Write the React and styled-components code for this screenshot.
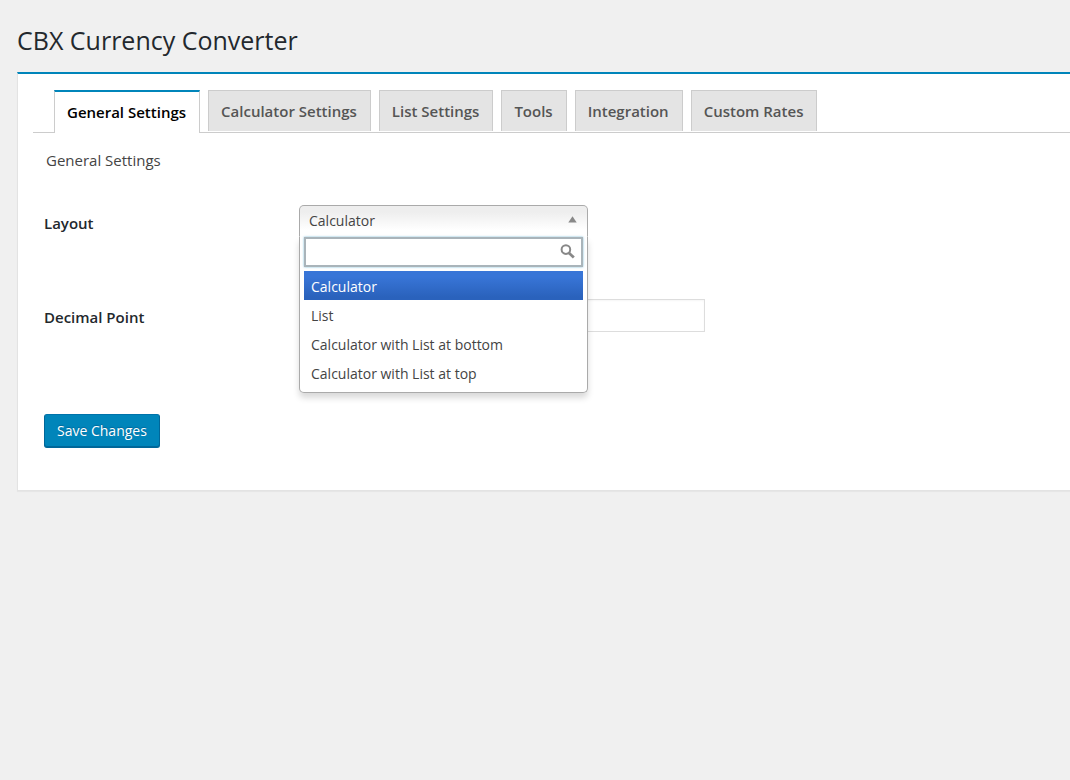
import React, { useState } from "react";
import styled, { createGlobalStyle } from "styled-components";

const GlobalStyle = createGlobalStyle`
  *, *::before, *::after { box-sizing: border-box; }
  body {
    margin: 0;
    background: #f0f0f0;
    color: #444;
    font: 14px/20px "Open Sans", "Noto Sans", sans-serif;
  }
  button, input { font: inherit; }
`;

const Page = styled.main`
  padding: 24px 0 24px 17px;
`;

const Title = styled.h1`
  margin: 0 0 16px;
  color: #23282d;
  font-size: 25px;
  font-weight: 400;
  line-height: 32px;
`;

const Panel = styled.section`
  padding: 16px 0 42px 15px;
  background: #fff;
  border: 1px solid #e3e3e3;
  border-top: 2px solid #0085ba;
  border-right: 0;
  box-shadow: 0 1px 1px rgba(0, 0, 0, 0.04);
`;

const TabBar = styled.nav`
  display: flex;
  gap: 8px;
  padding-left: 21px;
  border-bottom: 1px solid #ccc;
`;

const Tab = styled.a`
  height: ${({ $active }) => ($active ? 43 : 41)}px;
  margin-bottom: ${({ $active }) => ($active ? -1 : 1)}px;
  padding: 10px 13px 0 12px;
  border: 1px solid #ccc;
  border-top: ${({ $active }) => ($active ? "2px solid #0085ba" : "1px solid #ccc")};
  border-bottom: 0;
  background: ${({ $active }) => ($active ? "#fff" : "#e4e4e4")};
  color: ${({ $active }) => ($active ? "#000" : "#555")};
  font-size: 15px;
  font-weight: 600;
  text-decoration: none;
  white-space: nowrap;
`;

const Form = styled.form`
  padding: 17px 24px 0 11px;
`;

const SectionTitle = styled.h2`
  margin: 0 0 35px 2px;
  font-size: 15px;
  font-weight: 400;
  line-height: 20px;
`;

const Row = styled.div`
  display: grid;
  grid-template-columns: 255px minmax(0, 406px);
  min-height: 94px;
`;

const Label = styled.label`
  padding-top: 8px;
  color: #23282d;
  font-size: 15px;
  font-weight: 600;
`;

const TextInput = styled.input`
  width: 100%;
  height: 33px;
  padding: 4px 8px;
  border: 1px solid #ddd;
  background: #fff;
  box-shadow: inset 0 1px 2px rgba(0, 0, 0, 0.04);
  color: #32373c;
`;

const Picker = styled.div`
  position: relative;
  width: 289px;
  max-width: 100%;
  height: 32px;
`;

const PickerButton = styled.button`
  display: flex;
  align-items: center;
  justify-content: space-between;
  width: 100%;
  height: 32px;
  padding: 0 10px 0 9px;
  border: 1px solid #aaa;
  border-bottom-color: ${({ $open }) => ($open ? "transparent" : "#aaa")};
  border-radius: ${({ $open }) => ($open ? "5px 5px 0 0" : "5px")};
  background: linear-gradient(#eee 20%, #fff 80%) padding-box;
  color: #444;
  cursor: pointer;
`;

const Drop = styled.div`
  position: absolute;
  z-index: 1;
  top: 100%;
  left: 0;
  width: 100%;
  padding: 0 4px 4px;
  border: 1px solid #aaa;
  border-top: 0;
  border-radius: 0 0 5px 5px;
  background: #fff;
  box-shadow: 0 5px 6px rgba(0, 0, 0, 0.15);
`;

const SearchBox = styled.div`
  display: flex;
  align-items: center;
  height: 30px;
  padding: 0 6px 2px 0;
  border: 2px solid #a9b4ba;
  box-shadow: 0 0 2px rgba(30, 140, 190, 0.6);
`;

const SearchInput = styled.input`
  flex: 1;
  min-width: 0;
  height: 100%;
  padding: 0 5px;
  border: 0;
  outline: 0;
  background: transparent;
`;

const Options = styled.ul`
  margin: 4px 0 0;
  padding: 0 0 1px;
  list-style: none;
`;

const Option = styled.li`
  height: 29px;
  padding: 6px 7px 0;
  background: ${({ $selected }) => ($selected ? "linear-gradient(#3875d7 20%, #2a62bc 90%)" : "none")};
  color: ${({ $selected }) => ($selected ? "#fff" : "#444")};
  white-space: nowrap;
  cursor: pointer;
`;

const SaveButton = styled.button`
  display: block;
  height: 34px;
  margin-top: 21px;
  padding: 0 12px 1px;
  border: 1px solid;
  border-color: #0073aa #006799 #006799;
  border-radius: 3px;
  background: #0085ba;
  box-shadow: inset 0 -1px 0 #006799;
  color: #fff;
  text-shadow: 0 -1px 1px #006799;
  cursor: pointer;
`;

const TABS = [
  "General Settings",
  "Calculator Settings",
  "List Settings",
  "Tools",
  "Integration",
  "Custom Rates",
];

const LAYOUTS = [
  "Calculator",
  "List",
  "Calculator with List at bottom",
  "Calculator with List at top",
];

function Arrow({ up }) {
  return (
    <svg width="9" height="11" viewBox="0 0 9 11" aria-hidden="true">
      <path d={up ? "M4.5 0.3 8.7 6.5H0.3Z" : "M4.5 8.5 8.7 2.3H0.3Z"} fill="#888" />
    </svg>
  );
}

function SearchIcon() {
  return (
    <svg width="15" height="15" viewBox="0 0 15 15" fill="none" stroke="#888" aria-hidden="true">
      <circle cx="5.9" cy="5.6" r="4.3" strokeWidth="2" />
      <path d="M9 8.9 13.8 13.6" strokeWidth="2.8" />
    </svg>
  );
}

function LayoutPicker() {
  const [open, setOpen] = useState(true);
  const [value, setValue] = useState(LAYOUTS[0]);
  const [query, setQuery] = useState("");
  const shown = LAYOUTS.filter((l) => l.toLowerCase().includes(query.toLowerCase()));

  return (
    <Picker>
      <PickerButton
        id="layout"
        type="button"
        aria-haspopup="listbox"
        aria-expanded={open}
        $open={open}
        onClick={() => setOpen(!open)}
      >
        {value}
        <Arrow up={open} />
      </PickerButton>
      {open && (
        <Drop>
          <SearchBox>
            <SearchInput
              type="text"
              aria-label="Search layouts"
              value={query}
              onChange={(e) => setQuery(e.target.value)}
            />
            <SearchIcon />
          </SearchBox>
          <Options role="listbox" aria-label="Layout">
            {shown.map((l) => (
              <Option
                key={l}
                role="option"
                aria-selected={l === value}
                $selected={l === value}
                onClick={() => {
                  setValue(l);
                  setOpen(false);
                }}
              >
                {l}
              </Option>
            ))}
          </Options>
        </Drop>
      )}
    </Picker>
  );
}

export default function App() {
  const [active, setActive] = useState(TABS[0]);
  return (
    <>
      <GlobalStyle />
      <Page>
        <Title>CBX Currency Converter</Title>
        <Panel>
          <TabBar>
            {TABS.map((t) => (
              <Tab key={t} href="#" $active={t === active} onClick={() => setActive(t)}>
                {t}
              </Tab>
            ))}
          </TabBar>
          <Form onSubmit={(e) => e.preventDefault()}>
            <SectionTitle>General Settings</SectionTitle>
            <Row>
              <Label htmlFor="layout">Layout</Label>
              <LayoutPicker />
            </Row>
            <Row>
              <Label htmlFor="decimal-point">Decimal Point</Label>
              <TextInput id="decimal-point" type="text" />
            </Row>
            <SaveButton type="submit">Save Changes</SaveButton>
          </Form>
        </Panel>
      </Page>
    </>
  );
}
